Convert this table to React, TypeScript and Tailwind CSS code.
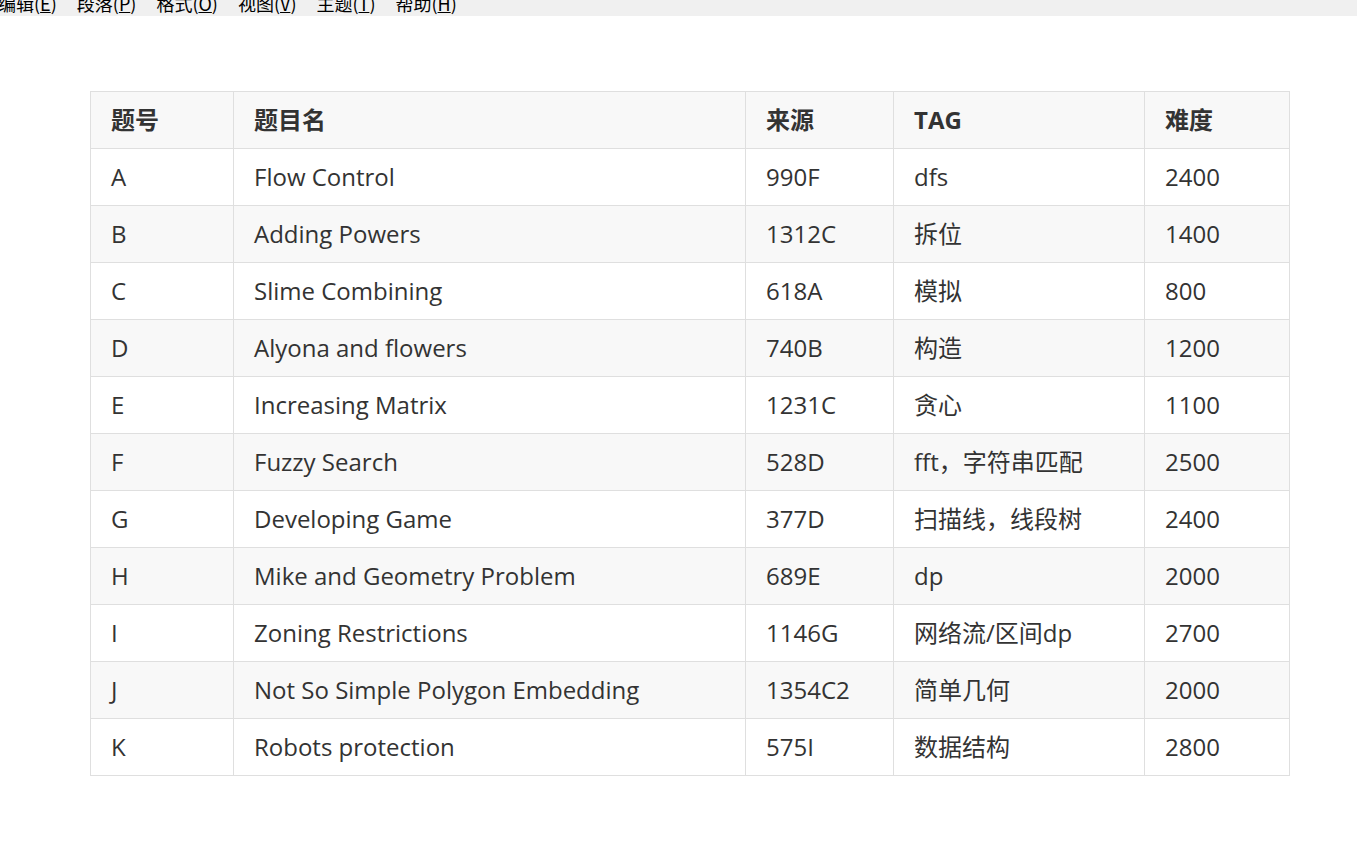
import React from 'react';

const menus = [
  { label: '编辑', key: 'E' },
  { label: '段落', key: 'P' },
  { label: '格式', key: 'O' },
  { label: '视图', key: 'V' },
  { label: '主题', key: 'T' },
  { label: '帮助', key: 'H' },
];

const rows: [string, string, string, string, string][] = [
  ['A', 'Flow Control', '990F', 'dfs', '2400'],
  ['B', 'Adding Powers', '1312C', '拆位', '1400'],
  ['C', 'Slime Combining', '618A', '模拟', '800'],
  ['D', 'Alyona and flowers', '740B', '构造', '1200'],
  ['E', 'Increasing Matrix', '1231C', '贪心', '1100'],
  ['F', 'Fuzzy Search', '528D', 'fft，字符串匹配', '2500'],
  ['G', 'Developing Game', '377D', '扫描线，线段树', '2400'],
  ['H', 'Mike and Geometry Problem', '689E', 'dp', '2000'],
  ['I', 'Zoning Restrictions', '1146G', '网络流/区间dp', '2700'],
  ['J', 'Not So Simple Polygon Embedding', '1354C2', '简单几何', '2000'],
  ['K', 'Robots protection', '575I', '数据结构', '2800'],
];

const font = { fontFamily: '"Open Sans", "Noto Sans CJK SC", sans-serif' };

export default function App() {
  return (
    <div className="min-h-screen bg-white text-[#333]" style={font}>
      {/* menu bar, scrolled so only the bottom shows */}
      <div className="h-4 overflow-hidden bg-[#f0f0f0]">
        <div
          className="flex gap-[20px] -mt-[9px] -ml-[2px] text-[18px] leading-[24px] text-black"
          style={{ fontFamily: '"Noto Sans CJK SC", sans-serif' }}
        >
          {menus.map((m) => (
            <span key={m.key} className="whitespace-nowrap">
              {m.label}(<span className="underline">{m.key}</span>)
            </span>
          ))}
        </div>
      </div>

      <div className="pl-[90px] pt-[75px]">
        <table className="table-fixed border-collapse w-[1199px] text-[24px] leading-[38px]">
          <colgroup>
            <col className="w-[143px]" />
            <col className="w-[512px]" />
            <col className="w-[148px]" />
            <col className="w-[251px]" />
            <col className="w-[145px]" />
          </colgroup>
          <thead>
            <tr className="bg-[#f8f8f8]">
              {['题号', '题目名', '来源', 'TAG', '难度'].map((h) => (
                <th key={h} className="border border-[#dfdfdf] px-[20px] py-[9px] text-left font-bold">
                  {h}
                </th>
              ))}
            </tr>
          </thead>
          <tbody>
            {rows.map((r, i) => (
              <tr key={r[0]} className={i % 2 === 1 ? 'bg-[#f8f8f8]' : 'bg-white'}>
                {r.map((c, j) => (
                  <td key={j} className="border border-[#dfdfdf] px-[20px] py-[9px] whitespace-nowrap">
                    {c}
                  </td>
                ))}
              </tr>
            ))}
          </tbody>
        </table>
      </div>
    </div>
  );
}
